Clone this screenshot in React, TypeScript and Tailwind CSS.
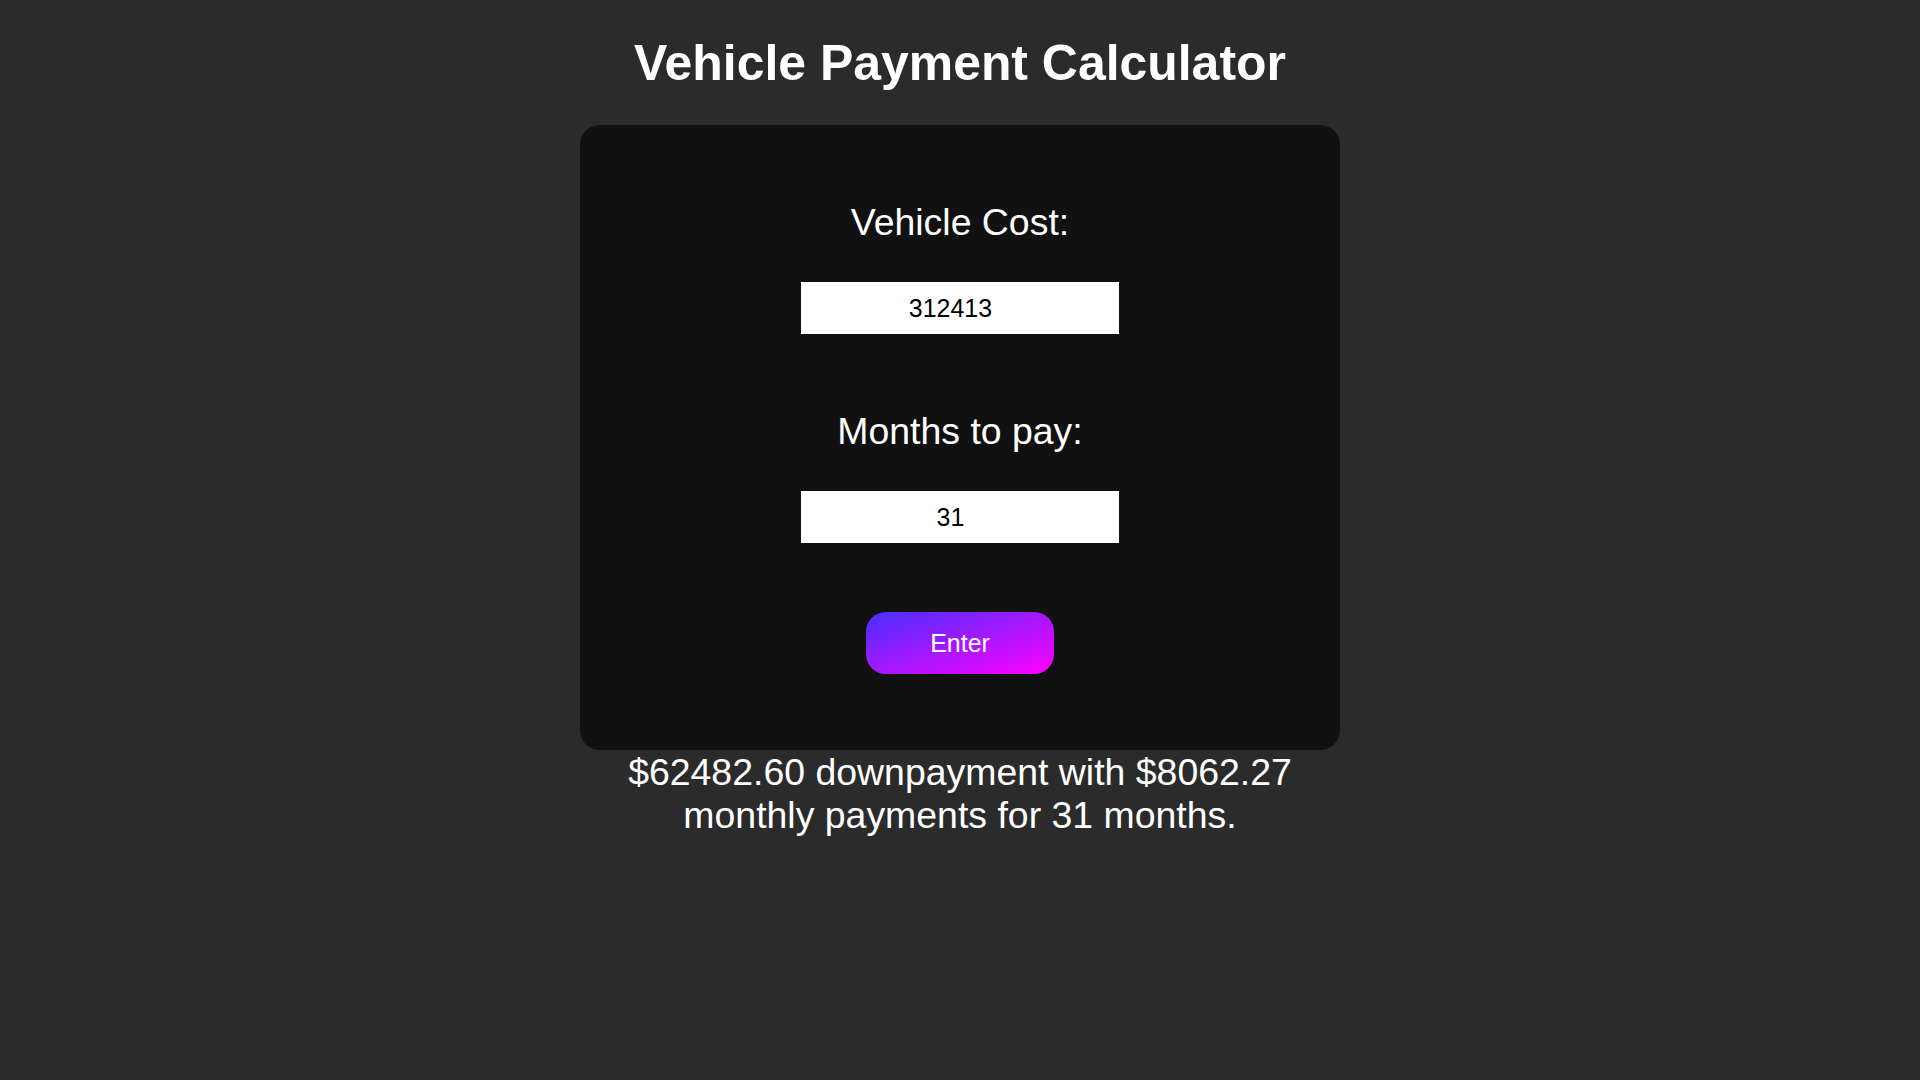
import { useState } from "react";

const App = () => {
  const [cost, setCost] = useState("312413");
  const [months, setMonths] = useState("31");
  const [result, setResult] = useState({ cost: 312413, months: 31 });

  const down = result.cost * 0.2;
  const monthly = (result.cost - down) / result.months;

  return (
    <div className="min-h-screen bg-[#2b2b2b] font-['Liberation_Sans',Arial,sans-serif] text-white flex flex-col items-center">
      <h1 className="mt-[35px] mb-[33px] text-[49.92px] leading-[57px] font-bold">Vehicle Payment Calculator</h1>
      <form
        className="w-[760px] rounded-[20px] bg-[#111111] flex flex-col items-center pt-[75px] pb-[76px]"
        onSubmit={(e) => {
          e.preventDefault();
          setResult({ cost: Number(cost) || 0, months: Number(months) || 1 });
        }}
      >
        <label className="text-[37.44px] leading-[45px]">Vehicle Cost:</label>
        <input
          type="number"
          value={cost}
          onChange={(e) => setCost(e.target.value)}
          className="mt-[37px] w-[318px] h-[52px] pt-[1px] pr-[4px] bg-white text-black text-center text-[24.96px] outline-none"
        />
        <label className="mt-[75px] text-[37.44px] leading-[45px]">Months to pay:</label>
        <input
          type="number"
          value={months}
          onChange={(e) => setMonths(e.target.value)}
          className="mt-[37px] w-[318px] h-[52px] pr-[4px] bg-white text-black text-center text-[24.96px] outline-none"
        />
        <button
          type="submit"
          className="mt-[69px] w-[188px] h-[62px] pt-[2px] rounded-[20px] bg-[linear-gradient(to_bottom_right,#4830ff,#ff00ff)] text-white text-[24.96px]"
        >
          Enter
        </button>
      </form>
      <p className="w-[760px] pt-[1px] text-center text-[37.44px] leading-[43px]">
        ${down.toFixed(2)} downpayment with ${monthly.toFixed(2)} monthly payments for {result.months} months.
      </p>
    </div>
  );
};

export default App;
